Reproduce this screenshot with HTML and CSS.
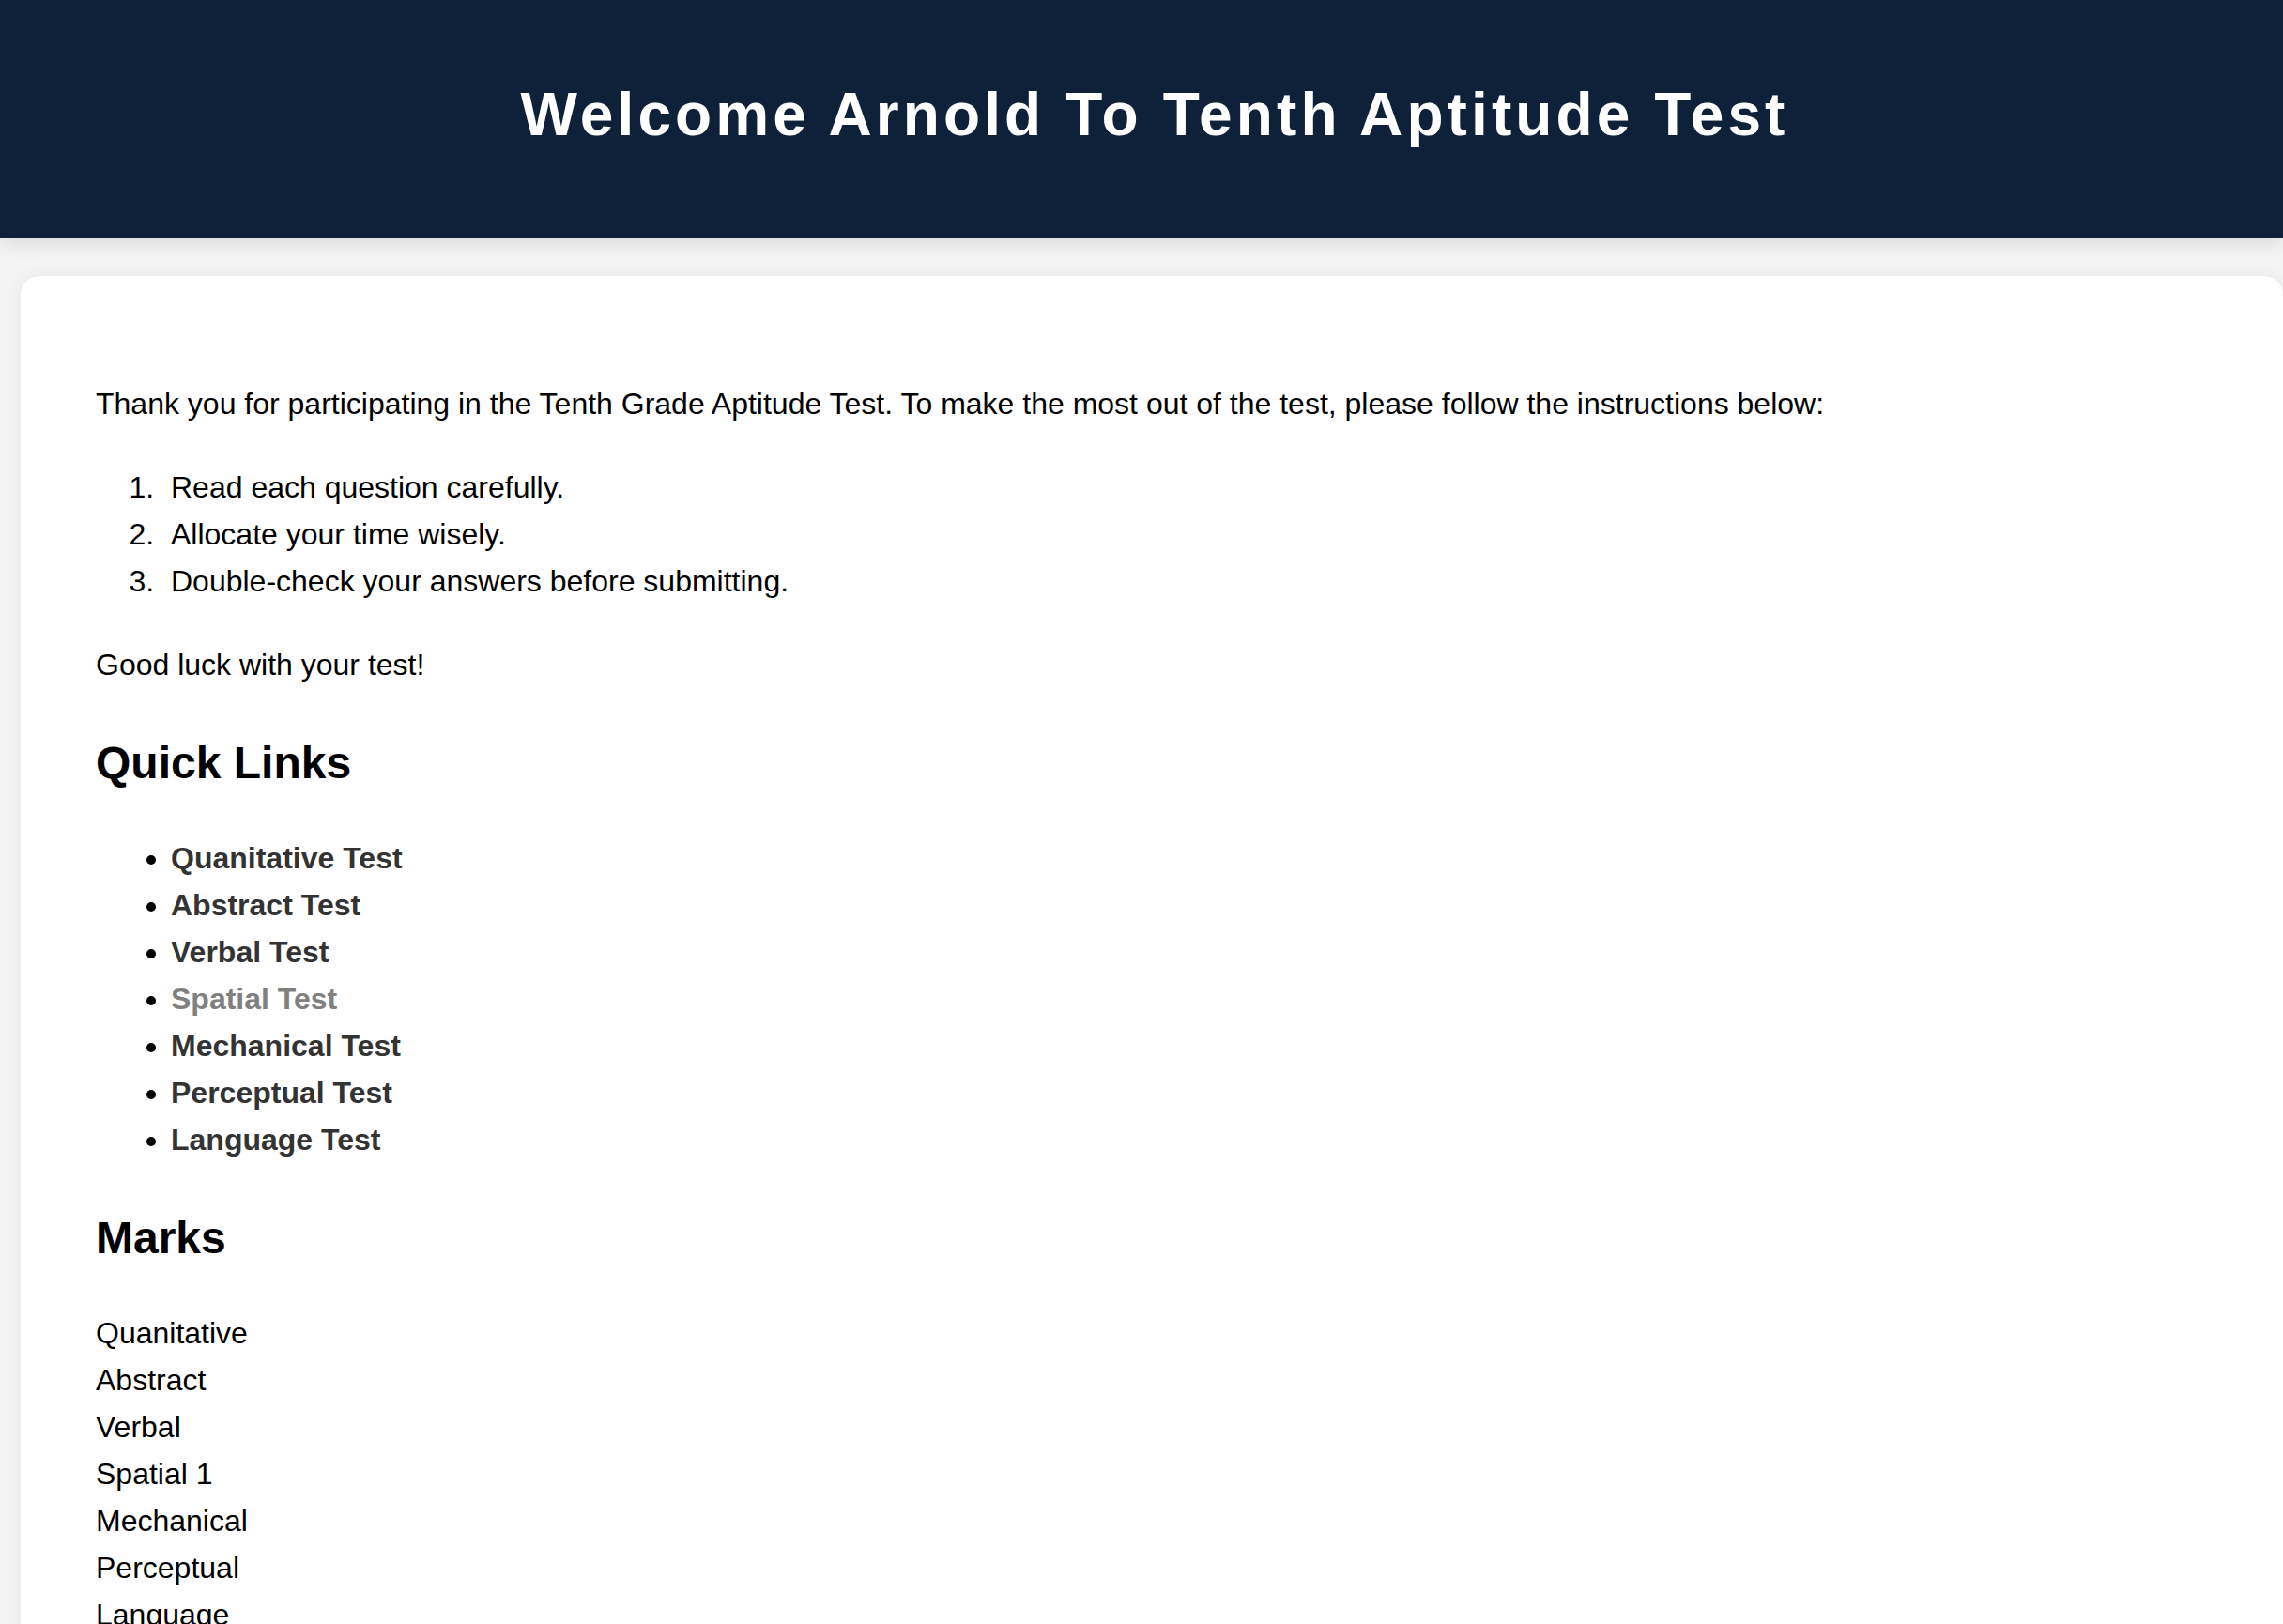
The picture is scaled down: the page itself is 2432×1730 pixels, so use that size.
FILE: index.html
```html
<!DOCTYPE html>
<html lang="en">
<head>
<meta charset="utf-8">
<title>Tenth Aptitude Test</title>
<link rel="stylesheet" href="styles.css">
</head>
<body>
<header class="topbar">
  <h1 class="title">Welcome Arnold To Tenth Aptitude Test</h1>
</header>
<main class="card">
  <p class="intro">Thank you for participating in the Tenth Grade Aptitude Test. To make the most out of the test, please follow the instructions below:</p>
  <ol class="steps">
    <li>Read each question carefully.</li>
    <li>Allocate your time wisely.</li>
    <li>Double-check your answers before submitting.</li>
  </ol>
  <p class="intro">Good luck with your test!</p>
  <h2 class="section">Quick Links</h2>
  <ul class="links">
    <li><a href="#">Quanitative Test</a></li>
    <li><a href="#">Abstract Test</a></li>
    <li><a href="#">Verbal Test</a></li>
    <li><a href="#" class="muted">Spatial Test</a></li>
    <li><a href="#">Mechanical Test</a></li>
    <li><a href="#">Perceptual Test</a></li>
    <li><a href="#">Language Test</a></li>
  </ul>
  <h2 class="section">Marks</h2>
  <div class="marks">
    <div>Quanitative</div>
    <div>Abstract</div>
    <div>Verbal</div>
    <div>Spatial 1</div>
    <div>Mechanical</div>
    <div>Perceptual</div>
    <div>Language</div>
  </div>
</main>
</body>
</html>
```
FILE: styles.css
```css
html, body {
  margin: 0;
  padding: 0;
  background: #f4f4f4;
  overflow-x: hidden;
}
body {
  font-family: "Liberation Sans", Arial, Helvetica, sans-serif;
  font-size: 32px;
  line-height: 50px;
  color: #000;
}
.topbar {
  background: #0e2138;
  height: 254px;
  box-sizing: border-box;
  padding: 85px 0 0 28px;
  box-shadow: 0 4px 20px rgba(0, 0, 0, 0.12);
  position: relative;
  z-index: 1;
}
.title {
  margin: 0;
  color: #fff;
  text-align: center;
  font-size: 64px;
  line-height: normal;
  font-weight: bold;
  letter-spacing: 4.1px;
}
.card {
  background: #fff;
  margin: 40px 0 0 22px;
  border-radius: 20px;
  padding: 72px 80px 40px;
  box-shadow: 0 0 20px rgba(0, 0, 0, 0.06);
}
.intro {
  margin: 39px 0;
}
.steps {
  margin: 39px 0;
  padding-left: 80px;
}
.steps li::marker {
  content: counter(list-item) ".\00a0\00a0";
}
.section {
  font-size: 48px;
  line-height: 55px;
  font-weight: bold;
  margin: 52px 0 49px;
}
.links {
  margin: 49px 0 52px;
  padding-left: 80px;
}
.links a {
  color: #333;
  font-weight: bold;
  text-decoration: none;
}
.links a.muted {
  color: #808080;
}
.marks {
  margin: 0;
}
```
